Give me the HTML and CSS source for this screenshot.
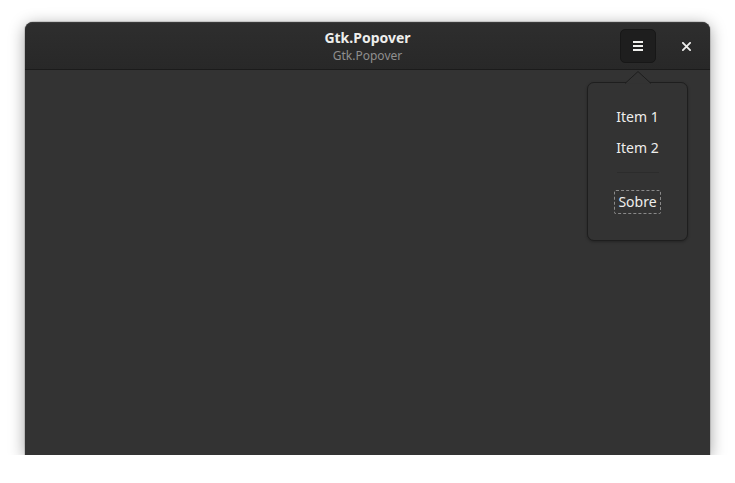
FILE: index.html
```html
<!DOCTYPE html>
<html>
<head>
<meta charset="utf-8">
<link rel="stylesheet" href="styles.css">
</head>
<body>
<div class="window">
  <header class="headerbar">
    <div class="spacer"></div>
    <div class="titles">
      <div class="title">Gtk.Popover</div>
      <div class="subtitle">Gtk.Popover</div>
    </div>
    <div class="controls">
      <button class="menu-btn" aria-label="Menu">
        <svg width="10" height="10" viewBox="0 0 10 10"><rect x="0" y="0" width="10" height="2" fill="#eeeeec"/><rect x="0" y="4" width="10" height="2" fill="#eeeeec"/><rect x="0" y="8" width="10" height="2" fill="#eeeeec"/></svg>
      </button>
      <button class="close-btn" aria-label="Close">
        <svg width="9" height="9" viewBox="0 0 10 10"><path d="M1 1 L9 9 M9 1 L1 9" stroke="#eeeeec" stroke-width="2" stroke-linecap="square"/></svg>
      </button>
    </div>
  </header>
  <main class="content"></main>
  <div class="popover">
    <svg class="arrow" width="26" height="13" viewBox="0 0 26 13"><path d="M0 12.5 L13 0.5 L26 12.5" fill="#333333" stroke="#1e1e1e" stroke-width="1"/></svg>
    <div class="item">Item 1</div>
    <div class="item">Item 2</div>
    <div class="sep"></div>
    <div class="about"><span class="focus">Sobre</span></div>
  </div>
</div>
</body>
</html>
```
FILE: styles.css
```css
html, body {
  margin: 0;
  padding: 0;
  background: #ffffff;
}
body {
  font-family: "Noto Sans", "Open Sans", sans-serif;
  color: #eeeeec;
}
.window {
  position: relative;
  margin: 22px 0 0 25px;
  width: 685px;
  height: 433px;
  border-radius: 8px 8px 0 0;
  background: #333333;
  box-shadow: 0 3px 16px rgba(0,0,0,0.38), 0 0 0 1px rgba(0,0,0,0.12);
  display: flex;
  flex-direction: column;
}
.headerbar {
  height: 47px;
  border-bottom: 1px solid #1b1b1b;
  background: linear-gradient(#2e2e2e, #282828);
  border-radius: 8px 8px 0 0;
  display: flex;
  align-items: center;
  box-shadow: inset 0 1px rgba(255,255,255,0.06);
}
.spacer {
  width: 90px;
}
.titles {
  flex: 1;
  text-align: center;
  margin-top: 0;
}
.title {
  font-weight: bold;
  font-size: 14px;
  line-height: 18px;
  color: #eeeeec;
}
.subtitle {
  font-size: 12px;
  line-height: 15px;
  margin-top: 1px;
  color: #8f8f8f;
}
.controls {
  width: 90px;
  display: flex;
  align-items: center;
  padding-top: 1px;
}
.menu-btn {
  width: 36px;
  height: 34px;
  margin-left: 0;
  border: 1px solid #171717;
  border-radius: 5px;
  background: #1e1e1e;
  padding: 0;
  display: flex;
  align-items: center;
  justify-content: center;
}
.close-btn {
  width: 24px;
  height: 24px;
  margin-left: 18px;
  border: none;
  background: transparent;
  padding: 0;
  display: flex;
  align-items: center;
  justify-content: center;
}
.content {
  flex: 1;
}
.popover {
  position: absolute;
  left: 562px;
  top: 60px;
  width: 101px;
  height: 159px;
  box-sizing: border-box;
  border: 1px solid #1e1e1e;
  border-radius: 7px;
  background: #333333;
  box-shadow: 0 1px 3px rgba(0,0,0,0.3);
  display: flex;
  flex-direction: column;
  align-items: center;
  padding-top: 22px;
}
.popover .arrow {
  position: absolute;
  top: -12px;
  left: 37px;
}
.item {
  font-size: 14px;
  line-height: 19px;
  height: 31px;
  display: flex;
  align-items: flex-start;
  justify-content: center;
  padding-top: 2px;
  box-sizing: border-box;
}
.sep {
  width: 42px;
  height: 1px;
  background: #2c2c2c;
  margin-top: 5px;
  margin-bottom: 17px;
}
.about {
  font-size: 14px;
}
.focus {
  display: inline-block;
  border: 1px dashed #8a8a8a;
  padding: 1px 3px 2px 3px;
  line-height: 19px;
  border-radius: 2px;
}
```
